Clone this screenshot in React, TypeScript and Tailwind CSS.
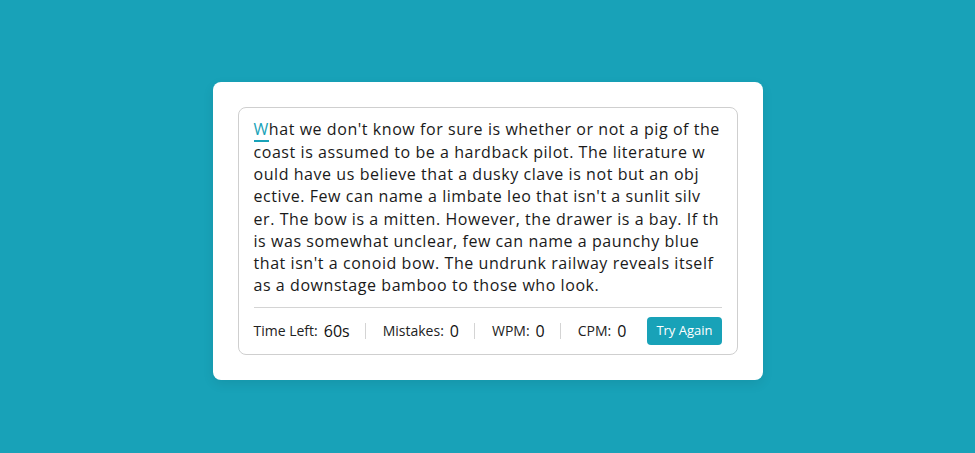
import React from 'react';

// Lines as they wrap in the typing box
const LINES = [
  "What we don't know for sure is whether or not a pig of the ",
  'coast is assumed to be a hardback pilot. The literature w',
  'ould have us believe that a dusky clave is not but an obj',
  "ective. Few can name a limbate leo that isn't a sunlit silv",
  'er. The bow is a mitten. However, the drawer is a bay. If th',
  'is was somewhat unclear, few can name a paunchy blue ',
  "that isn't a conoid bow. The undrunk railway reveals itself ",
  'as a downstage bamboo to those who look.',
];

const Stat: React.FC<{ label: string; value: string; divider?: boolean }> = ({ label, value, divider }) => (
  <div className="flex items-center">
    <span className="text-[14px] text-[#222]">{label}</span>
    <span className="ml-[6px] text-[16px] font-medium text-[#111]">{value}</span>
    {divider && <span className="ml-[15px] mr-[17px] h-[16px] w-px bg-[#d4d4d4]" />}
  </div>
);

export default function App() {
  return (
    <div className="flex min-h-[453px] w-full items-center justify-center bg-[#18a2b8] pt-[9px] font-['Open_Sans',sans-serif]">
      <div className="w-[550px] rounded-[8px] bg-white p-[25px] shadow-[0_4px_12px_rgba(0,0,0,0.08)]">
        <div className="rounded-[8px] border border-[#cfcfcf] px-[15px]">
          <div className="pb-[10px] pt-[10px] text-[16px] leading-[22.3px] tracking-[0.55px] text-[#1a1a1a]">
            {LINES.map((line, li) => (
              <div key={li} className="whitespace-pre">
                {line.split('').map((c, i) => (
                  <span
                    key={i}
                    className={li === 0 && i === 0 ? 'border-b-2 border-[#18a2b8] text-[#18a2b8]' : ''}
                  >
                    {c}
                  </span>
                ))}
              </div>
            ))}
          </div>
          <div className="flex items-center justify-between border-t border-[#d4d4d4] pb-[9px] pt-[9px]">
            <div className="flex items-center">
              <Stat label="Time Left:" value="60s" divider />
              <Stat label="Mistakes:" value="0" divider />
              <Stat label="WPM:" value="0" divider />
              <Stat label="CPM:" value="0" />
            </div>
            <button className="h-[28px] rounded-[4px] bg-[#18a2b8] px-[9px] text-[13px] font-medium text-white">
              Try Again
            </button>
          </div>
        </div>
      </div>
    </div>
  );
}
